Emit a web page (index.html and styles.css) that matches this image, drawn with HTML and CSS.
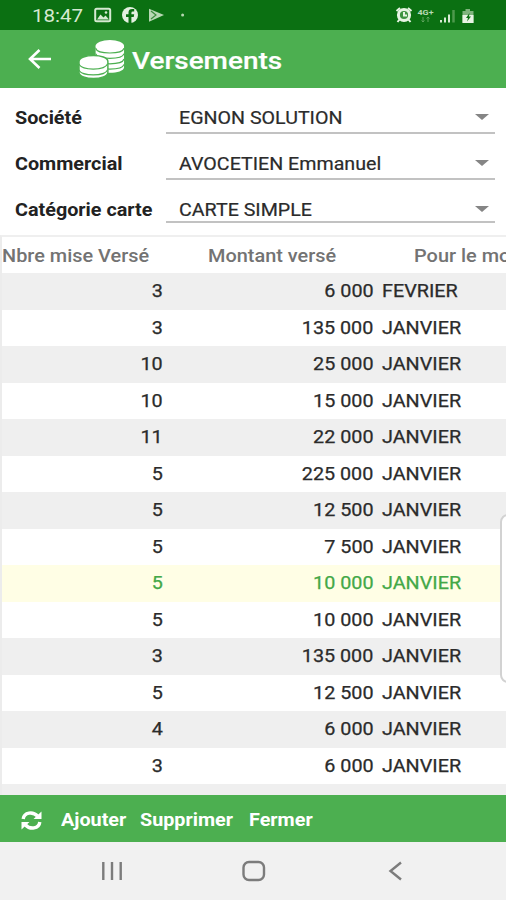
FILE: index.html
```html
<!DOCTYPE html>
<html lang="fr">
<head>
<meta charset="utf-8">
<title>Versements</title>
<link rel="stylesheet" href="styles.css">
</head>
<body>
<div class="status">
  <span class="t time">18:47</span>
  <svg class="left-icons" width="94" height="18" viewBox="0 0 94 18">
    <rect x="1.2" y="2.7" width="15" height="12.6" rx="1.5" fill="none" stroke="#d5e9d1" stroke-width="2"/>
    <path d="M3 13.500l3.500-5 3 3 2-2 3.500 4z" fill="#d5e9d1"/><circle cx="12" cy="6.500" r="1.300" fill="#d5e9d1"/>
    <circle cx="36" cy="9" r="8" fill="#e3f0e0"/>
    <path d="M34.500 17v-6H32V8.300h2.500V6.500q0-3.400 3.700-3.400h2v2.500h-1.500q-1.300 0-1.300 1.300v1.400h2.800l-.5 2.700h-2.300v6z" fill="#0b7012"/>
    <path d="M55 2.700l15 6.300-15 6.800z" fill="#b8d8b4"/><path d="M57 5l5 4-5 4" fill="none" stroke="#3b8a3c" stroke-width="1.200"/>
    <circle cx="88.600" cy="9" r="1.500" fill="#b5d6b0"/>
  </svg>
  <svg class="right-icons" width="82" height="20" viewBox="0 0 82 20">
    <circle cx="9" cy="10" r="5.600" fill="#3f9342" stroke="#e8f4e4" stroke-width="3"/>
    <path d="M9 7v3.500h3M1.500 6L5 3M16.500 6L13 3M4.500 14.500L2.500 17M13.500 14.500l2 2.500" fill="none" stroke="#e8f4e4" stroke-width="2"/>
    <text x="22.500" y="10" class="net" textLength="16" lengthAdjust="spacingAndGlyphs">4G+</text>
    <path d="M28 12v5M26.500 15.500l1.500 1.500 1.500-1.500M33 17v-5M31.500 13.500l1.500-1.500 1.500 1.500" fill="none" stroke="#5fa25d" stroke-width="1"/>
    <path d="M46 15v2.500M50 12.500v5M54 9.500v8" stroke="#d8ebd4" stroke-width="2"/><path d="M58.500 5v12.500" stroke="#4e994d" stroke-width="2.500"/>
    <path d="M67.500 6h3V4h4.500v2h3.500v12h-11z" fill="#7fb47d"/><path d="M67.500 10h11v8h-11z" fill="#e8f4e4"/><path d="M74.500 8l-3.500 5h2l-1 3.500 4-5h-2z" fill="#0b7012"/>
  </svg>
</div>
<header class="bar">
  <svg class="back" width="24" height="22" viewBox="0 0 24 22"><path d="M23 11H2M11.500 2L2 11l9.500 9" fill="none" stroke="#fff" stroke-width="2.600"/></svg>
  <svg class="coins" width="47" height="42" viewBox="0 0 48 42">
    <g fill="#fff">
      <path d="M17 6.500v22c0 7.500 29 7.500 29 0v-22z"/><ellipse cx="31.500" cy="6.500" rx="14.500" ry="6"/>
    </g>
    <g fill="none" stroke="#4caf50" stroke-width="1.200">
      <path d="M17 9c2 6.500 27 6.500 29 0M17 14.500c2 6.500 27 6.500 29 0M17 20c2 6.500 27 6.500 29 0M17 25.500c2 6.500 27 6.500 29 0"/>
    </g>
    <path d="M0 22.500v11c0 8.500 29.500 8.500 29.500 0v-11c0-8-29.500-8-29.500 0z" fill="#fff" stroke="#4caf50" stroke-width="1.500"/>
    <path d="M0 25c2 7 27 7 29 0M0 31c2 7 27 7 29 0" fill="none" stroke="#4caf50" stroke-width="1.200"/>
  </svg>
  <h1 class="t">Versements</h1>
</header>
<section class="form">
  <div class="field"><label class="t">Société</label><div class="select"><span class="t">EGNON SOLUTION</span><i class="caret"></i></div></div>
  <div class="field"><label class="t">Commercial</label><div class="select"><span class="t">AVOCETIEN Emmanuel</span><i class="caret"></i></div></div>
  <div class="field last"><label class="t">Catégorie carte</label><div class="select"><span class="t">CARTE SIMPLE</span><i class="caret"></i></div></div>
</section>
<main class="table">
  <div class="row head"><span class="t">Nbre mise Versé</span><span class="t">Montant versé</span><span class="t">Pour le mois</span></div>
  <div class="row"><span class="t">3</span><span class="t">6 000</span><span class="t">FEVRIER</span></div>
  <div class="row"><span class="t">3</span><span class="t">135 000</span><span class="t">JANVIER</span></div>
  <div class="row"><span class="t">10</span><span class="t">25 000</span><span class="t">JANVIER</span></div>
  <div class="row"><span class="t">10</span><span class="t">15 000</span><span class="t">JANVIER</span></div>
  <div class="row"><span class="t">11</span><span class="t">22 000</span><span class="t">JANVIER</span></div>
  <div class="row"><span class="t">5</span><span class="t">225 000</span><span class="t">JANVIER</span></div>
  <div class="row"><span class="t">5</span><span class="t">12 500</span><span class="t">JANVIER</span></div>
  <div class="row"><span class="t">5</span><span class="t">7 500</span><span class="t">JANVIER</span></div>
  <div class="row selected"><span class="t">5</span><span class="t">10 000</span><span class="t">JANVIER</span></div>
  <div class="row"><span class="t">5</span><span class="t">10 000</span><span class="t">JANVIER</span></div>
  <div class="row"><span class="t">3</span><span class="t">135 000</span><span class="t">JANVIER</span></div>
  <div class="row"><span class="t">5</span><span class="t">12 500</span><span class="t">JANVIER</span></div>
  <div class="row"><span class="t">4</span><span class="t">6 000</span><span class="t">JANVIER</span></div>
  <div class="row"><span class="t">3</span><span class="t">6 000</span><span class="t">JANVIER</span></div>
  <div class="handle"></div>
</main>
<footer class="actions">
  <svg class="refresh" width="21" height="19" viewBox="0 0 21 19">
    <path d="M2.200 8C3 1 12 .2 16.500 5M18.800 11C18 18 9 18.800 4.500 14" fill="none" stroke="#fff" stroke-width="3.400"/>
    <path d="M20.500 .5V8h-8zM.5 18.500V11h8z" fill="#fff"/>
  </svg>
  <span class="t add">Ajouter</span><span class="t del">Supprimer</span><span class="t close">Fermer</span>
</footer>
<nav class="nav">
  <svg width="506" height="58" viewBox="0 0 506 58" fill="none" stroke="#7c7c7c" stroke-width="2.400">
    <path d="M103.300 20v18M112 20v18M120.700 20v18"/>
    <rect x="243.500" y="20" width="20.500" height="18" rx="5.500"/>
    <path d="M401 20.500L390.500 29 401 37.500"/>
  </svg>
</nav>
</body>
</html>
```

FILE: styles.css
```css
* { box-sizing: border-box; }
body {
  margin: 0;
  width: 506px;
  height: 900px;
  overflow: hidden;
  display: flex;
  flex-direction: column;
  background: #fff;
  color: #2b2b2b;
  font: 17.5px/1 Roboto, "Liberation Sans", sans-serif;
}
/* wide lettering: each label is stretched horizontally */
.t {
  display: block;
  white-space: nowrap;
  transform: scaleX(var(--sx, 1.13));
  transform-origin: left center;
}
.status {
  height: 30px;
  flex: none;
  display: flex;
  align-items: center;
  background: #0b7012;
  padding-left: 32px;
}
.time { --sx: 1.11; width: 62px; font-size: 18.5px; color: #d5e9d1; padding-top: 2px; }
.right-icons { margin-left: 207px; }
.net { font: bold 8px Roboto, sans-serif; fill: #b8d9b4; }
.bar {
  height: 58px;
  flex: none;
  display: flex;
  align-items: center;
  background: #4caf50;
  color: #fff;
  padding-left: 28px;
}
.coins { margin: 2px 0 0 26.5px; }
h1 { --sx: 1.14; margin: 4px 0 0 6px; font-size: 24.5px; font-weight: 500; -webkit-text-stroke: .2px; }
.form { height: 147px; flex: none; padding: 3px 11px 0 15px; }
.field { height: 46px; display: flex; align-items: flex-start; }
label { width: 151px; font-weight: 700; color: #222; padding-top: 19px; }
.select {
  --sx: 1.122;
  height: 43px;
  flex: 1;
  display: flex;
  justify-content: space-between;
  border-bottom: 2px solid #c2c2c2;
  padding: 19px 6px 0 13px;
  -webkit-text-stroke: .2px;
}
.last .select { height: 40px; }
.caret {
  width: 0;
  height: 0;
  margin-top: 4px;
  border: 7px solid transparent;
  border-top: 6px solid #858585;
  border-bottom: 0;
}
.table {
  height: 560px;
  flex: none;
  position: relative;
  overflow: hidden;
  background: #efefef;
  border-left: 2px solid #ececec;
  border-top: 2px solid #efefef;
}
.row {
  height: 36.5px;
  display: grid;
  grid-template-columns: 161px 210.5px 1fr;
  align-items: center;
  background: #fff;
}
.row:nth-child(even) { background: #efefef; }
.row:not(.head) .t { padding-top: 1px; -webkit-text-stroke: .25px; }
.row:not(.head) .t:nth-child(-n+2) { justify-self: end; transform-origin: right center; }
.row:not(.head) .t:nth-child(3) { margin-left: 8.5px; }
.row.selected { background: #fffee5; color: #43a847; }
.row.head { height: 36px; grid-template-columns: 206px 205.5px 1fr; color: #737373; font-weight: 500; --sx: 1.138; }
.head .t { padding-top: 3px; }
.handle {
  position: absolute;
  right: -10px;
  top: 277px;
  width: 16px;
  height: 169px;
  background: #fff;
  border: 2px solid #d2d2d2;
  border-radius: 8px;
}
.actions {
  height: 47px;
  flex: none;
  display: flex;
  align-items: center;
  padding-left: 21px;
  background: #4caf50;
  color: #fff;
  font-weight: 700;
}
.actions .t { padding-top: 5px; }
.refresh { margin: 4px 19px 0 0; }
.add { width: 79px; }
.del { width: 109px; }
.nav { height: 58px; flex: none; background: #f1f1f1; }
.nav svg { display: block; }
```
